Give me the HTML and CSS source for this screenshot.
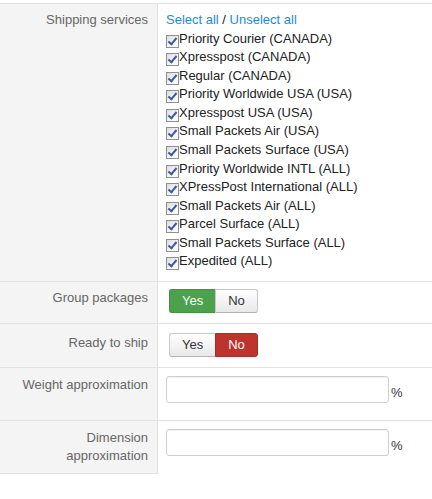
FILE: index.html
```html
<!DOCTYPE html>
<html>
<head>
<meta charset="utf-8">
<link rel="stylesheet" href="styles.css">
</head>
<body>
<div class="form">
  <div class="row row-services">
    <div class="key">Shipping services</div>
    <div class="val">
      <div class="line"><a class="link" href="#">Select all</a> / <a class="link" href="#">Unselect all</a></div>
      <label class="line"><span class="cb"></span>Priority Courier (CANADA)</label>
      <label class="line"><span class="cb"></span>Xpresspost (CANADA)</label>
      <label class="line"><span class="cb"></span>Regular (CANADA)</label>
      <label class="line"><span class="cb"></span>Priority Worldwide USA (USA)</label>
      <label class="line"><span class="cb"></span>Xpresspost USA (USA)</label>
      <label class="line"><span class="cb"></span>Small Packets Air (USA)</label>
      <label class="line"><span class="cb"></span>Small Packets Surface (USA)</label>
      <label class="line"><span class="cb"></span>Priority Worldwide INTL (ALL)</label>
      <label class="line"><span class="cb"></span>XPressPost International (ALL)</label>
      <label class="line"><span class="cb"></span>Small Packets Air (ALL)</label>
      <label class="line"><span class="cb"></span>Parcel Surface (ALL)</label>
      <label class="line"><span class="cb"></span>Small Packets Surface (ALL)</label>
      <label class="line"><span class="cb"></span>Expedited (ALL)</label>
    </div>
  </div>
  <div class="row row-group">
    <div class="key">Group packages</div>
    <div class="val">
      <div class="btn-group">
        <span class="btn btn-success">Yes</span><span class="btn">No</span>
      </div>
    </div>
  </div>
  <div class="row row-ready">
    <div class="key">Ready to ship</div>
    <div class="val">
      <div class="btn-group">
        <span class="btn">Yes</span><span class="btn btn-danger">No</span>
      </div>
    </div>
  </div>
  <div class="row row-input">
    <div class="key">Weight approximation</div>
    <div class="val">
      <div class="field"><input class="text" type="text"><span class="pct">%</span></div>
    </div>
  </div>
  <div class="row row-input row-last">
    <div class="key">Dimension<br>approximation</div>
    <div class="val">
      <div class="field"><input class="text" type="text"><span class="pct">%</span></div>
    </div>
  </div>
</div>
</body>
</html>
```
FILE: styles.css
```css
html, body {
  margin: 0;
  padding: 0;
  background: #fff;
}
body {
  font-family: "Liberation Sans", Arial, sans-serif;
  font-size: 13px;
  line-height: 1.42857;
  color: #333;
}
.form {
  margin-top: 3px;
  border-top: 1px solid #e2e2e2;
}
.row {
  display: grid;
  grid-template-columns: 158px 1fr;
  border-bottom: 1px solid #e2e2e2;
}
.row-last {
  border-bottom: 0;
}
.key {
  box-sizing: border-box;
  background: #f4f4f4;
  border-right: 1px solid #e2e2e2;
  text-align: right;
  color: #666;
  padding: 7px 9px 0 8px;
}
.row-last .key {
  border-bottom: 1px solid #e2e2e2;
  padding-bottom: 7px;
}
.val {
  padding: 7px 8px 10px 8px;
}
.line {
  display: block;
  height: 18.57px;
  white-space: nowrap;
  color: #222;
}
.link {
  color: #1d8bd1;
  text-decoration: none;
}
.line .link + .link {
  margin-left: 0;
}
.cb {
  display: inline-block;
  position: relative;
  box-sizing: border-box;
  width: 13px;
  height: 13px;
  vertical-align: -5px;
  border: 1px solid #8f8f8f;
  background: linear-gradient(135deg, #dcdcdc 0%, #f4f6fa 60%, #ffffff 100%);
}
.cb::after {
  content: "";
  position: absolute;
  left: 3px;
  top: 0px;
  width: 3px;
  height: 7px;
  border: solid #3d5a9e;
  border-width: 0 2px 2px 0;
  transform: rotate(40deg);
}
.row-group .key {
  padding-top: 7px;
}
.row-group .val {
  padding: 7px 8px 10px 11px;
}
.row-ready .key {
  padding-top: 10px;
}
.row-ready .val {
  padding: 9px 8px 10px 11px;
}
.btn-group {
  display: flex;
}
.btn {
  display: block;
  box-sizing: border-box;
  height: 24px;
  padding: 2px 12px;
  line-height: 18px;
  font-size: 13px;
  color: #333;
  border: 1px solid #c8c8c8;
  border-bottom-color: #b3b3b3;
  background: linear-gradient(#ffffff, #e8e8e8);
}
.btn:first-child {
  border-radius: 3px 0 0 3px;
  border-right: 0;
}
.btn:last-child {
  border-radius: 0 3px 3px 0;
}
.btn-success {
  background: #4ca24c;
  border-color: #3f923f;
  color: #fff;
}
.btn-danger {
  background: #bd332d;
  border-color: #a52c27;
  color: #fff;
}
.row-input .key {
  padding-top: 8px;
}
.row-input .val {
  padding: 8px 8px 17px 8px;
}
.field {
  display: flex;
  align-items: flex-end;
  gap: 2px;
}
.text {
  box-sizing: border-box;
  width: 223px;
  height: 27px;
  margin: 0;
  padding: 3px 6px;
  border: 1px solid #cfcfcf;
  border-radius: 3px;
  background: #fff;
  box-shadow: inset 0 1px 1px rgba(0, 0, 0, 0.06);
  font-family: inherit;
  font-size: 13px;
}
.pct {
  color: #333;
  line-height: 18.57px;
}
```
